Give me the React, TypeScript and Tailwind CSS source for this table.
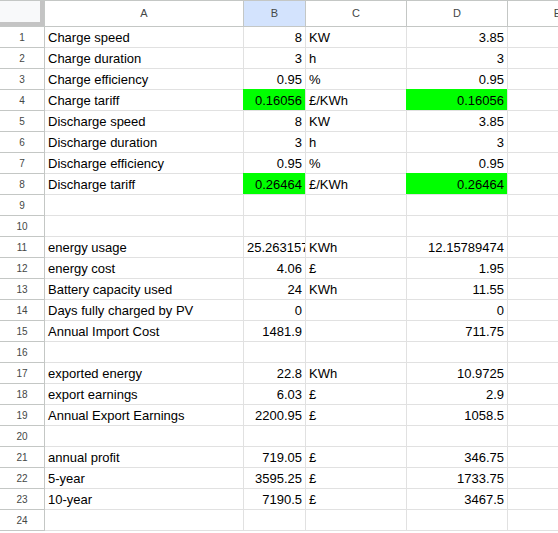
import React from "react";

type Row = [string, string, string, string, boolean?];

const rows: Row[] = [
  ["Charge speed", "8", "KW", "3.85"],
  ["Charge duration", "3", "h", "3"],
  ["Charge efficiency", "0.95", "%", "0.95"],
  ["Charge tariff", "0.16056", "£/KWh", "0.16056", true],
  ["Discharge speed", "8", "KW", "3.85"],
  ["Discharge duration", "3", "h", "3"],
  ["Discharge efficiency", "0.95", "%", "0.95"],
  ["Discharge tariff", "0.26464", "£/KWh", "0.26464", true],
  ["", "", "", ""],
  ["", "", "", ""],
  ["energy usage", "25.26315789", "KWh", "12.15789474"],
  ["energy cost", "4.06", "£", "1.95"],
  ["Battery capacity used", "24", "KWh", "11.55"],
  ["Days fully charged by PV", "0", "", "0"],
  ["Annual Import Cost", "1481.9", "", "711.75"],
  ["", "", "", ""],
  ["exported energy", "22.8", "KWh", "10.9725"],
  ["export earnings", "6.03", "£", "2.9"],
  ["Annual Export Earnings", "2200.95", "£", "1058.5"],
  ["", "", "", ""],
  ["annual profit", "719.05", "£", "346.75"],
  ["5-year", "3595.25", "£", "1733.75"],
  ["10-year", "7190.5", "£", "3467.5"],
  ["", "", "", ""],
];

const cell = "h-[21px] border-r border-b border-[#e1e1e1] px-[3px] leading-[22px] whitespace-nowrap overflow-hidden";
const green = "bg-[#00ff00] border-[#00ff00] shadow-[-1px_-1px_0_#00ff00]";
const head = "h-[27px] border-t border-r border-b border-[#c4c7c5] flex items-center justify-center text-[11px] text-[#444746]";

export default function App() {
  return (
    <div className="w-[558px] h-[533px] overflow-hidden bg-white font-['Liberation_Sans',Arial,sans-serif] text-[13px] text-black">
      <div className="grid grid-cols-[45px_199px_62px_101px_101px_100px] w-[608px]">
        {/* header row */}
        <div className="h-[27px] border-t border-r border-b border-[#c4c7c5] bg-[#f8f9fa] shadow-[inset_-4px_-4px_0_#c4c4c4]" />
        <div className={`${head} bg-white`}>A</div>
        <div className={`${head} bg-[#d3e3fd] text-[#041e49]`}>B</div>
        <div className={`${head} bg-white`}>C</div>
        <div className={`${head} bg-white`}>D</div>
        <div className={`${head} bg-white`}>E</div>

        {rows.map(([a, b, c, d, hl], i) => (
          <React.Fragment key={i}>
            <div className="h-[21px] border-r border-b border-[#c4c7c5] flex items-center justify-center text-[10px] text-[#444746]">
              {i + 1}
            </div>
            <div className={cell}>{a}</div>
            <div className={`${cell} ${i === 10 ? "text-left" : "text-right"} ${hl ? green : ""}`}>{b}</div>
            <div className={cell}>{c}</div>
            <div className={`${cell} text-right ${hl ? green : ""}`}>{d}</div>
            <div className={cell} />
          </React.Fragment>
        ))}
      </div>
    </div>
  );
}
